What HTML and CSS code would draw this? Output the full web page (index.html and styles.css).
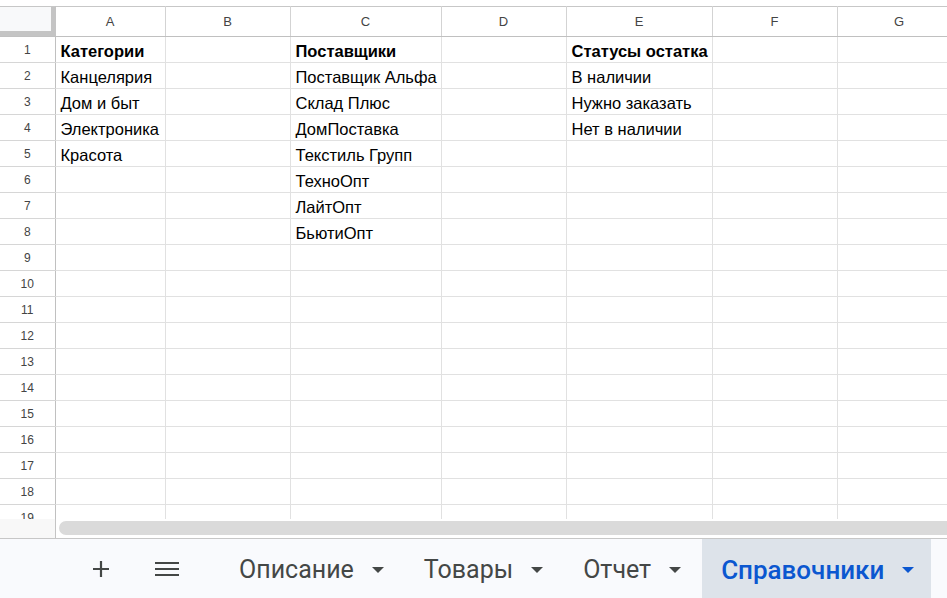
FILE: index.html
```html
<!DOCTYPE html>
<html>
<head>
	<meta charset="UTF-8">
	<title>Справочники</title>
	<link rel="stylesheet" href="styles.css">
</head>
<body>
	<div class="sheet">
		<table class="grid">
			<colgroup>
				<col class="c-rh"><col class="c-a"><col class="c-b"><col class="c-c"><col class="c-d"><col class="c-e"><col class="c-f"><col class="c-g">
			</colgroup>
			<thead>
				<tr>
					<th class="corner"></th>
					<th>A</th><th>B</th><th>C</th><th>D</th><th>E</th><th>F</th><th>G</th>
				</tr>
			</thead>
			<tbody>
				<tr><th>1</th><td class="b">Категории</td><td></td><td class="b">Поставщики</td><td></td><td class="b">Статусы остатка</td><td></td><td></td></tr>
				<tr><th>2</th><td>Канцелярия</td><td></td><td>Поставщик Альфа</td><td></td><td>В наличии</td><td></td><td></td></tr>
				<tr><th>3</th><td>Дом и быт</td><td></td><td>Склад Плюс</td><td></td><td>Нужно заказать</td><td></td><td></td></tr>
				<tr><th>4</th><td>Электроника</td><td></td><td>ДомПоставка</td><td></td><td>Нет в наличии</td><td></td><td></td></tr>
				<tr><th>5</th><td>Красота</td><td></td><td>Текстиль Групп</td><td></td><td></td><td></td><td></td></tr>
				<tr><th>6</th><td></td><td></td><td>ТехноОпт</td><td></td><td></td><td></td><td></td></tr>
				<tr><th>7</th><td></td><td></td><td>ЛайтОпт</td><td></td><td></td><td></td><td></td></tr>
				<tr><th>8</th><td></td><td></td><td>БьютиОпт</td><td></td><td></td><td></td><td></td></tr>
				<tr><th>9</th><td></td><td></td><td></td><td></td><td></td><td></td><td></td></tr>
				<tr><th>10</th><td></td><td></td><td></td><td></td><td></td><td></td><td></td></tr>
				<tr><th>11</th><td></td><td></td><td></td><td></td><td></td><td></td><td></td></tr>
				<tr><th>12</th><td></td><td></td><td></td><td></td><td></td><td></td><td></td></tr>
				<tr><th>13</th><td></td><td></td><td></td><td></td><td></td><td></td><td></td></tr>
				<tr><th>14</th><td></td><td></td><td></td><td></td><td></td><td></td><td></td></tr>
				<tr><th>15</th><td></td><td></td><td></td><td></td><td></td><td></td><td></td></tr>
				<tr><th>16</th><td></td><td></td><td></td><td></td><td></td><td></td><td></td></tr>
				<tr><th>17</th><td></td><td></td><td></td><td></td><td></td><td></td><td></td></tr>
				<tr><th>18</th><td></td><td></td><td></td><td></td><td></td><td></td><td></td></tr>
				<tr><th>19</th><td></td><td></td><td></td><td></td><td></td><td></td><td></td></tr>
			</tbody>
		</table>
	</div>
	<div class="hscroll">
		<div class="hs-left"></div>
		<div class="hs-track"><div class="hs-thumb"></div></div>
	</div>
	<div class="tabbar">
		<div class="tb-btn">
			<svg width="20" height="20" viewBox="0 0 20 20"><path d="M10 2v16M2 10h16" stroke="#444746" stroke-width="2.2" fill="none"/></svg>
		</div>
		<div class="tb-btn">
			<svg width="26" height="20" viewBox="0 0 26 20"><path d="M1 4h24M1 10h24M1 16h24" stroke="#444746" stroke-width="2.2" fill="none"/></svg>
		</div>
		<div class="tabs">
			<div class="tab"><span>Описание</span><i class="caret"></i></div>
			<div class="tab"><span>Товары</span><i class="caret"></i></div>
			<div class="tab"><span>Отчет</span><i class="caret"></i></div>
			<div class="tab active"><span>Справочники</span><i class="caret"></i></div>
		</div>
	</div>
</body>
</html>
```
FILE: styles.css
```css
html, body {
	margin: 0;
	padding: 0;
	background: #fff;
}
body {
	width: 947px;
	height: 598px;
	overflow: hidden;
	display: flex;
	flex-direction: column;
	font-family: Arial, "Liberation Sans", sans-serif;
}

/* сетка */
.sheet {
	height: 519px;
	overflow: hidden;
	padding-top: 6px;
	box-sizing: border-box;
}
.grid {
	border-collapse: collapse;
	table-layout: fixed;
	width: 961px;
	border-top: 1px solid #c7c7c7;
}
.c-rh { width: 55px; }
.c-a { width: 110px; }
.c-b { width: 125px; }
.c-c { width: 151px; }
.c-d { width: 125px; }
.c-e { width: 146px; }
.c-f { width: 125px; }
.c-g { width: 124px; }

.grid th, .grid td {
	padding: 0;
	border-right: 1px solid #e1e1e1;
	border-bottom: 1px solid #e1e1e1;
	white-space: nowrap;
	overflow: hidden;
}
.grid thead th {
	height: 29px;
	font-weight: normal;
	font-size: 13px;
	color: #444;
	border-right-color: #d3d3d3;
	border-bottom: 1px solid #c0c0c0;
}
.grid thead th.corner {
	background: #f8f9fa;
	box-shadow: inset -4px -5px 0 #c4c4c4;
	border-right: 1px solid #c4c4c4;
}
.grid tbody th {
	height: 25px;
	font-weight: normal;
	font-size: 12px;
	color: #444;
	border-right: 1px solid #c0c0c0;
	border-bottom-color: #d6d6d6;
}
.grid td {
	height: 25px;
	font-size: 16.5px;
	color: #000;
	padding: 0 0 2px 5px;
	line-height: 18px;
	vertical-align: bottom;
	box-sizing: border-box;
}
.grid td.b {
	font-weight: bold;
}

/* полоса прокрутки */
.hscroll {
	height: 19px;
	display: flex;
}
.hs-left {
	width: 56px;
	background: #f8f8f8;
	border-right: 1px solid #c4c4c4;
	box-sizing: border-box;
}
.hs-track {
	flex: 1;
	padding: 2px 0 3px 3px;
}
.hs-thumb {
	height: 14px;
	background: #dadada;
	border-radius: 7px 0 0 7px;
}

/* вкладки */
.tabbar {
	flex: 1;
	display: flex;
	align-items: stretch;
	background: #f9fafd;
	border-top: 1px solid #c7c7c7;
	font-family: Roboto, "Noto Sans", sans-serif;
}
.tb-btn {
	display: flex;
	align-items: center;
	justify-content: center;
	width: 40px;
}
.tb-btn:first-child {
	margin-left: 81px;
}
.tb-btn + .tb-btn {
	margin-left: 26px;
}
.tabs {
	display: flex;
	margin-left: 33px;
	gap: 3px;
}
.tab {
	display: flex;
	align-items: center;
	padding: 2px 18px 0 19px;
	font-size: 25px;
	color: #444746;
}
.tab .caret {
	margin-left: 18px;
	width: 0;
	height: 0;
	border-left: 6.5px solid transparent;
	border-right: 6.5px solid transparent;
	border-top: 6.5px solid #444746;
}
.tab.active {
	background: #dde3ea;
	color: #0b57d0;
	font-weight: 500;
	font-size: 26px;
	padding-right: 17px;
}
.tab.active .caret {
	border-top-color: #0b57d0;
}
```
